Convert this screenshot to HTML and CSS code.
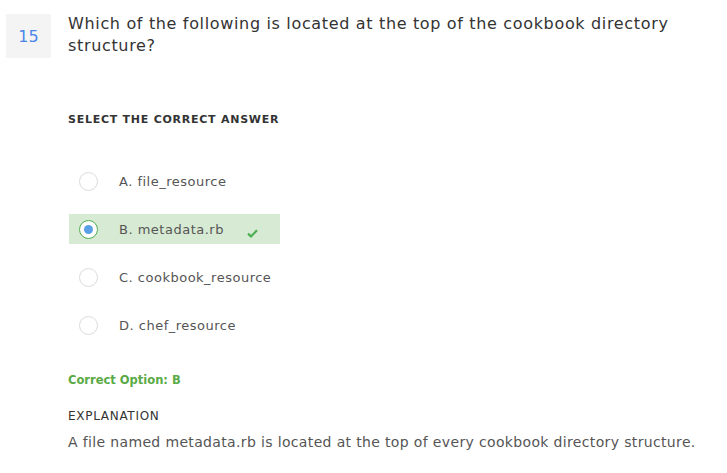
FILE: index.html
```html
<!DOCTYPE html>
<html>
<head>
<meta charset="utf-8">
<link rel="stylesheet" href="styles.css">
</head>
<body>
<div class="page">
  <div class="question">
    <div class="qnum">15</div>
    <div class="qtext">Which of the following is located at the top of the cookbook directory structure?</div>
  </div>
  <div class="content">
    <div class="label">SELECT THE CORRECT ANSWER</div>
    <ul class="options">
      <li class="option"><span class="radio"></span><span class="opt-text">A. file_resource</span></li>
      <li class="option selected"><span class="radio"><span class="dot"></span></span><span class="opt-text">B. metadata.rb</span>
        <svg class="check" width="11" height="9" viewBox="0 0 11 9"><path d="M1 4.6 L4 7.4 L10 1.2" fill="none" stroke="#4caf50" stroke-width="2.2"/></svg>
      </li>
      <li class="option"><span class="radio"></span><span class="opt-text">C. cookbook_resource</span></li>
      <li class="option"><span class="radio"></span><span class="opt-text">D. chef_resource</span></li>
    </ul>
    <div class="correct">Correct Option: B</div>
    <div class="label expl-label">EXPLANATION</div>
    <div class="expl">A file named metadata.rb is located at the top of every cookbook directory structure.</div>
  </div>
</div>
</body>
</html>
```
FILE: styles.css
```css
html, body {
  margin: 0;
  padding: 0;
  background: #fff;
}
.page {
  font-family: "DejaVu Sans", "Liberation Sans", sans-serif;
  color: #333;
  padding: 14px 0 0 6px;
}
.question {
  display: flex;
  align-items: flex-start;
  gap: 17px;
}
.qnum {
  width: 45px;
  height: 44px;
  flex: none;
  background: #f4f4f4;
  color: #4a86e8;
  font-size: 16px;
  display: flex;
  align-items: center;
  justify-content: center;
}
.qtext {
  font-size: 16px;
  line-height: 22px;
  color: #333;
  margin-top: -1px;
  width: 630px;
  letter-spacing: 0.66px;
}
.content {
  padding-left: 62px;
}
.label {
  font-size: 11px;
  font-weight: bold;
  letter-spacing: 0.75px;
  color: #333;
  line-height: 14px;
  margin-top: 55px;
}
.options {
  list-style: none;
  margin: 39px 0 0 0;
  padding: 0;
  display: flex;
  flex-direction: column;
  gap: 18px;
}
.option {
  position: relative;
  width: 211px;
  height: 30px;
  margin-left: 1px;
  display: flex;
  align-items: center;
  padding-left: 10px;
  box-sizing: border-box;
  gap: 21px;
}
.option.selected {
  background: #d7ead3;
}
.radio {
  width: 19px;
  height: 19px;
  box-sizing: border-box;
  border: 1px solid #dcdcdc;
  border-radius: 50%;
  background: #fff;
  flex: none;
  display: flex;
  align-items: center;
  justify-content: center;
}
.selected .radio {
  border-color: #4caf50;
}
.dot {
  width: 9px;
  height: 9px;
  border-radius: 50%;
  background: #5aa0e6;
}
.opt-text {
  font-size: 13px;
  color: #555;
  letter-spacing: 0.5px;
}
.check {
  position: absolute;
  left: 178px;
  top: 15px;
}
.correct {
  margin-top: 33px;
  font-size: 11.5px;
  font-weight: bold;
  color: #5aaa46;
  line-height: 14px;
}
.expl-label {
  margin-top: 22px;
  font-weight: normal;
  font-size: 12px;
  letter-spacing: 0.7px;
}
.expl {
  margin-top: 10px;
  font-size: 14px;
  color: #555;
  line-height: 18px;
  letter-spacing: 0.35px;
}
```
